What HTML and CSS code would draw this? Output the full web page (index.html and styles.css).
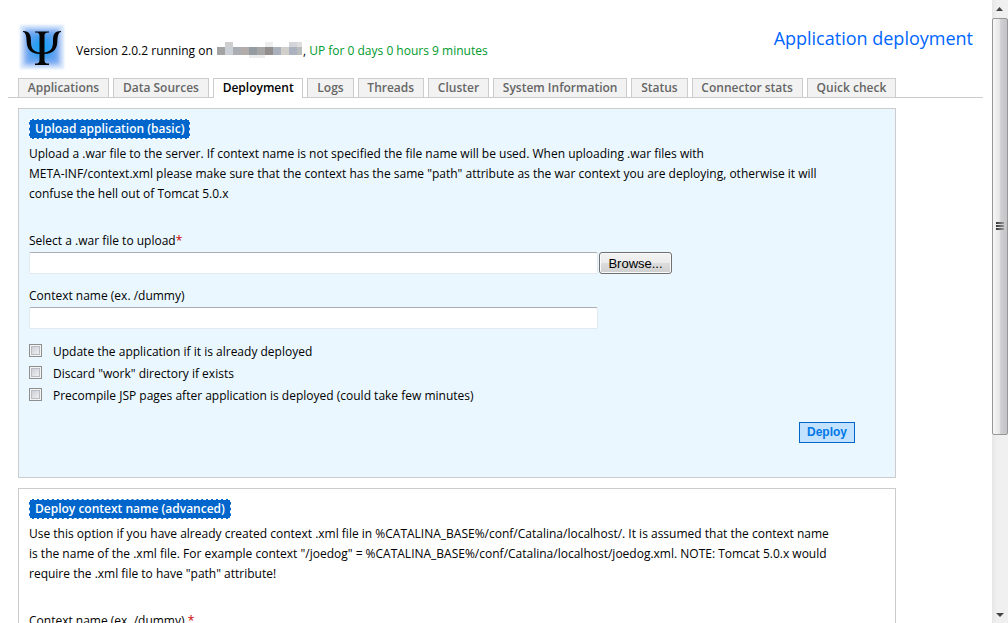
FILE: index.html
```html
<!DOCTYPE html>
<html lang="en">
<head>
<meta charset="utf-8">
<title>Application deployment</title>
<link rel="stylesheet" href="styles.css">
</head>
<body>
<div class="page">
  <header class="header">
    <svg class="logo" width="48" height="48" viewBox="0 0 48 48" role="img" aria-label="Psi Probe">
      <defs>
        <radialGradient id="core"><stop offset="0" stop-color="#12a8f8"/><stop offset=".6" stop-color="#2f9cf2"/><stop offset="1" stop-color="#5ea2f0"/></radialGradient>
        <filter id="soft" x="-20%" y="-20%" width="140%" height="140%"><feGaussianBlur stdDeviation="2"/></filter>
        <filter id="edge" x="-20%" y="-20%" width="140%" height="140%"><feGaussianBlur stdDeviation="1"/></filter>
      </defs>
      <rect x="2" y="2" width="44" height="44" fill="#dbe8fb" filter="url(#edge)"/>
      <rect x="6" y="6" width="36" height="36" fill="#86b0f2" filter="url(#soft)"/>
      <rect x="10" y="10" width="28" height="28" fill="url(#core)" filter="url(#soft)"/>
      <path d="M17 8.500H31V9.500C28 9.500 26.500 10 26.500 13V29.500C33 28.500 35 25 35 19C35 12 35.500 8 43 8V9C40 9.500 39.500 14 39.300 19C39 26.500 35 30.500 26.500 31V37C26.500 40 28 40.500 31 40.500V42H17V40.500C20 40.500 21.500 40 21.500 37V31C13 30.500 9 26.500 8.700 19C8.500 14 8 9.500 5 9V8C12 8 13 12 13 19C13 25 15 28.500 21.500 29.500V13C21.500 10 20 9.500 17 9.500Z" fill="#050505"/>
    </svg>
    <p class="status">Version 2.0.2 running on
      <svg class="host" width="87" height="17" viewBox="0 0 87 17" aria-hidden="true" shape-rendering="crispEdges">
        <path fill="#a4a4a4" d="M1 5h8v8H1z"/><path fill="#cbd0d7" d="M9 5h8v8H9z"/><path fill="#cfcfcf" d="M9 0h8v5H9z"/><path fill="#aaaeb3" d="M17 5h8v8h-8z"/><path fill="#b2adaa" d="M25 5h8v8h-8z"/><path fill="#949ca1" d="M33 5h8v8h-8z"/><path fill="#a5a6a5" d="M41 5h8v8h-8z"/><path fill="#928e8d" d="M49 5h8v8h-8z"/><path fill="#aab1bd" d="M57 5h8v8h-8z"/><path fill="#d2cec9" d="M65 5h8v8h-8z"/><path fill="#abb1be" d="M73 5h8v8h-8z"/><path fill="#b9bdbc" d="M81 5h5v8h-5z"/><path fill="#ededed" d="M33 13h16v3H33zM49 0h8v5h-8z"/><path fill="#d3d4d8" d="M73 0h8v5h-8z"/><path fill="#dedede" d="M81 0h5v5h-5z"/>
      </svg>, <span class="uptime">UP for 0 days 0 hours 9 minutes</span></p>
    <h1 class="title">Application deployment</h1>
  </header>

  <nav class="tabbar">
    <div class="tabs">
      <a class="tab" href="#applications">Applications</a>
      <a class="tab" href="#datasources">Data Sources</a>
      <a class="tab current" href="#deployment" aria-current="page">Deployment</a>
      <a class="tab" href="#logs">Logs</a>
      <a class="tab" href="#threads">Threads</a>
      <a class="tab" href="#cluster">Cluster</a>
      <a class="tab" href="#system">System Information</a>
      <a class="tab" href="#status">Status</a>
      <a class="tab" href="#connectors">Connector stats</a>
      <a class="tab" href="#check">Quick check</a>
    </div>
  </nav>

  <main class="main">
    <form class="block tinted">
      <h2 class="heading">Upload application (basic)</h2>
      <p class="text">Upload a .war file to the server. If context name is not specified the file name will be used. When uploading .war files with<br>META-INF/context.xml please make sure that the context has the same "path" attribute as the war context you are deploying, otherwise it will<br>confuse the hell out of Tomcat 5.0.x</p>
      <div class="field">
        <label for="war">Select a .war file to upload<span class="required">*</span></label>
        <div class="filerow"><input class="input" id="war" type="text"><button class="browse" type="button">Browse...</button></div>
      </div>
      <div class="field">
        <label for="ctx">Context name (ex. /dummy)</label>
        <input class="input" id="ctx" type="text">
      </div>
      <div class="checks">
        <label class="check"><input type="checkbox" class="box">Update the application if it is already deployed</label>
        <label class="check"><input type="checkbox" class="box">Discard "work" directory if exists</label>
        <label class="check"><input type="checkbox" class="box">Precompile JSP pages after application is deployed (could take few minutes)</label>
      </div>
      <div class="actions"><button class="deploy" type="submit">Deploy</button></div>
    </form>

    <form class="block">
      <h2 class="heading">Deploy context name (advanced)</h2>
      <p class="text">Use this option if you have already created context .xml file in %CATALINA_BASE%/conf/Catalina/localhost/. It is assumed that the context name<br>is the name of the .xml file. For example context "/joedog" = %CATALINA_BASE%/conf/Catalina/localhost/joedog.xml. NOTE: Tomcat 5.0.x would<br>require the .xml file to have "path" attribute!</p>
      <div class="field">
        <label for="ctx2">Context name (ex. /dummy) <span class="required">*</span></label>
        <input class="input" id="ctx2" type="text">
      </div>
    </form>
  </main>
</div>
<div class="scrollbar" aria-hidden="true">
  <svg class="arrow" width="16" height="18" viewBox="0 0 16 18"><path d="M4 11L7.500 7L11 11Z" fill="#444"/></svg>
  <div class="thumb"><i class="grip"></i><i class="grip"></i><i class="grip"></i></div>
  <div class="track"></div>
  <svg class="arrow" width="16" height="18" viewBox="0 0 16 18"><path d="M4 8H12L8 12Z" fill="#444"/></svg>
</div>
</body>
</html>
```
FILE: styles.css
```css
* { box-sizing: border-box; }

body {
  display: flex;
  height: 100vh;
  margin: 0;
  overflow: hidden;
  background: #fff;
  color: #000;
  font: 12px/20px "Trebuchet MS", "Open Sans", sans-serif;
}

h1, h2, p { margin: 0; }

.page { flex: 1; min-width: 0; padding: 23px 9px 0 8px; }

.header { display: flex; padding: 0 10px; height: 55px; }
.logo { flex: none; margin-right: 10px; }
.status { padding-top: 18px; white-space: nowrap; }
.host { vertical-align: -4px; }
.uptime { color: #009a2e; }
.title {
  margin-left: auto;
  padding-top: 2px;
  font-size: 18px;
  font-weight: 400;
  line-height: 26px;
  color: #06f;
  white-space: nowrap;
}

.tabbar { padding-left: 10px; border-bottom: 1px solid #ccc; }
.tabs { display: flex; gap: 4px; width: 91%; }
.tab {
  flex: 1 0 auto;
  height: 19px;
  border: 1px solid #ccc;
  border-bottom: 0;
  background: #f2f2f2;
  color: #666;
  font-weight: 600;
  line-height: 18px;
  text-align: center;
  text-decoration: none;
  white-space: nowrap;
}
.current { height: 20px; margin-bottom: -1px; background: #fff; color: #000; }

.main { padding: 10px 0 0 10px; width: 91%; min-width: 888px; }
.block { padding: 10px; margin-bottom: 10px; border: 1px solid #ccc; }
.tinted { background: #eaf7ff; }
.heading {
  width: fit-content;
  padding: 0 5px;
  border: 1px dashed #fff;
  background: #06c;
  color: #fff;
  font-size: 12px;
  font-weight: 600;
  line-height: 18px;
}
.text { margin: 5px 0 27px; white-space: nowrap; }
.field { margin-bottom: 12px; }
.field label { display: block; line-height: 20px; }
.required { color: #c00; }
.filerow { display: flex; gap: 1px; }
.input {
  display: block;
  width: 569px;
  height: 22px;
  margin: 1px 0 0;
  border: 1px solid #e2e9ef;
  border-top-color: #abadb3;
  border-radius: 2px;
  background: #fff;
}
.browse {
  width: 73px;
  height: 22px;
  margin-top: 1px;
  padding: 0;
  border: 1px solid #707070;
  border-radius: 3px;
  background: linear-gradient(#f3f3f3, #ebebeb 50%, #ddd 50%, #cfcfcf);
  box-shadow: inset 0 0 0 1px #fafafa;
  color: #000;
  font: 13px "Liberation Sans", Arial, sans-serif;
}

.check { display: flex; align-items: center; height: 22px; }
.box {
  appearance: none;
  width: 13px;
  height: 13px;
  margin: 0 11px 4px 0;
  border: 1px solid #8e8f8f;
  background: linear-gradient(135deg, #c4c9d0, #f6f6f6);
  box-shadow: inset 0 0 0 1px #f4f4f4, inset 0 0 0 2px #b9bdc3;
}
.actions { display: flex; justify-content: flex-end; padding: 15px 30px 24px 0; }
.deploy {
  padding: 0 7px;
  border: 1px solid #06c;
  background: #c2e2ff;
  color: #0077e6;
  font: bold 12px/19px "Liberation Sans", Arial, sans-serif;
}

.scrollbar {
  display: flex;
  flex-direction: column;
  width: 16px;
  background: linear-gradient(90deg, #e6e6e6, #efefef 30%, #f0f0f0);
}
.arrow { display: block; }
.thumb {
  display: flex;
  flex: 416 0 0;
  flex-direction: column;
  align-items: center;
  justify-content: center;
  gap: 1px;
  border: 1px solid #979797;
  border-radius: 2px;
  background: linear-gradient(90deg, #f6f6f6, #e8e8e9 45%, #d0d0d3 55%, #c4c4c8);
}
.grip { width: 8px; height: 2px; background: linear-gradient(90deg, #333, #999); }
.track { flex: 171 0 0; }
```
